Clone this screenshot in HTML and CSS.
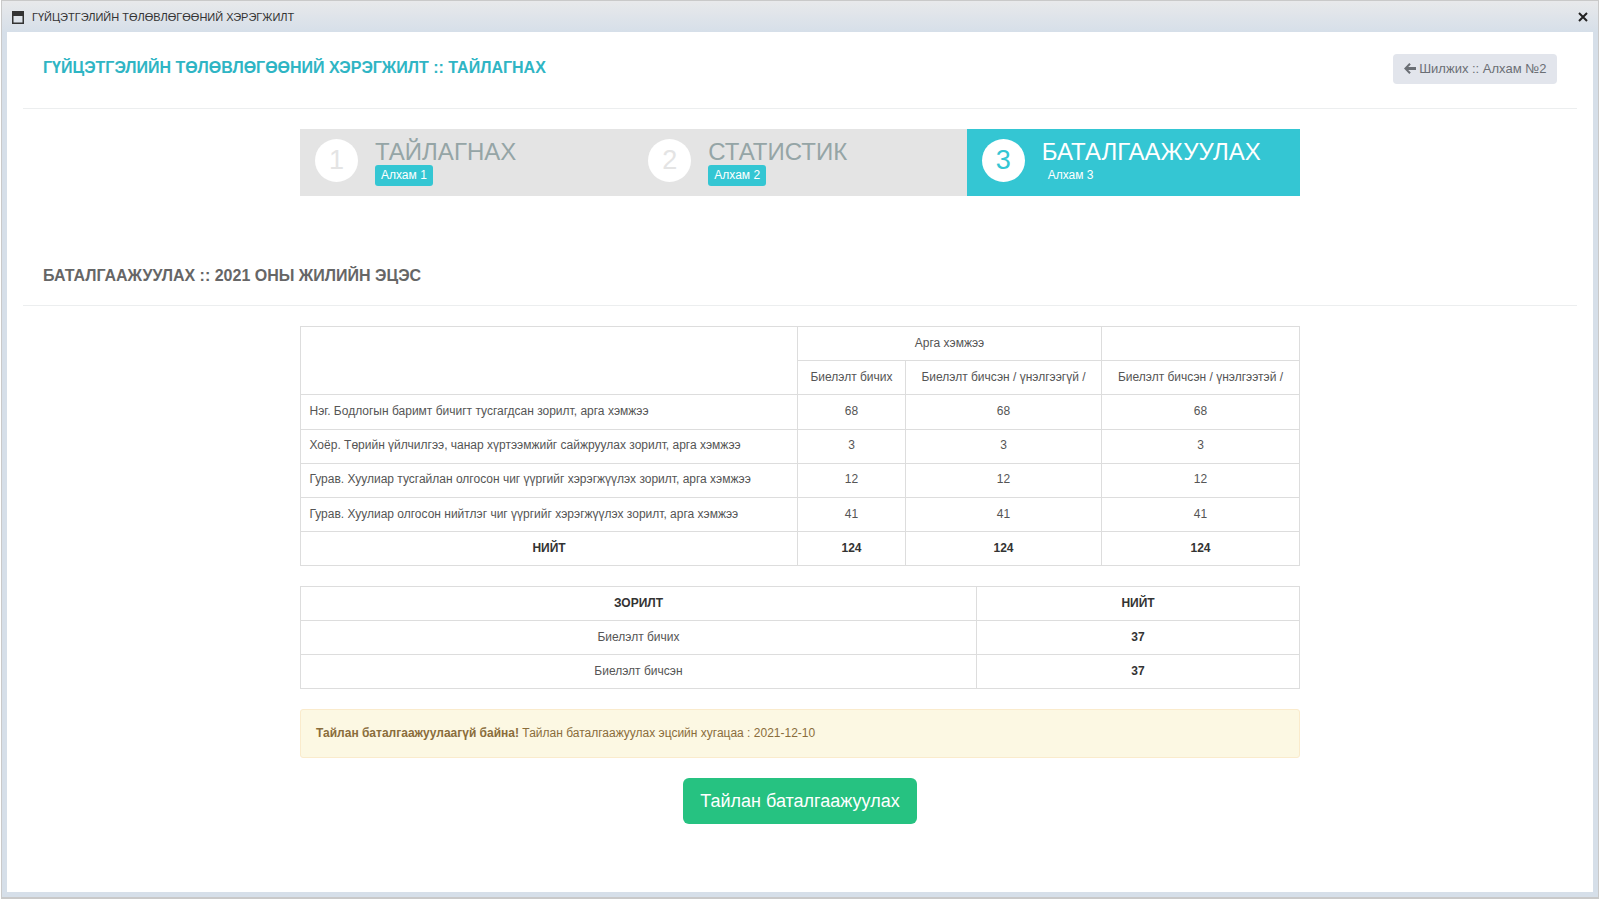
FILE: index.html
```html
<!DOCTYPE html>
<html lang="en">
<head>
  <meta charset="UTF-8"/>
  <title>Гүйцэтгэлийн төлөвлөгөөний хэрэгжилт</title>
  <link rel="stylesheet" href="styles.css">
</head>
<body>
<div class="window">
  <div class="window-bar">
    <svg class="window-icon" width="12" height="13" viewBox="0 0 12 13"><path fill="#333" d="M0 0h12v13H0zM1.500 5v6.500h9V5z"/></svg>
    <span class="window-title">ГҮЙЦЭТГЭЛИЙН ТӨЛӨВЛӨГӨӨНИЙ ХЭРЭГЖИЛТ</span>
    <svg class="window-close" width="10" height="10" viewBox="0 0 10 10"><path stroke="#222" stroke-width="2" d="M1 1l8 8M9 1l-8 8"/></svg>
  </div>

  <div class="window-body">
    <div class="page-head">
      <h1>ГҮЙЦЭТГЭЛИЙН ТӨЛӨВЛӨГӨӨНИЙ ХЭРЭГЖИЛТ :: ТАЙЛАГНАХ</h1>
      <button class="back-btn">
        <svg width="12" height="11" viewBox="0 0 12 11"><path fill="#6b6f75" d="M5.300 0l1.500 1.500-2.600 2.500H12v3H4.200l2.600 2.500L5.300 11 0 5.500z"/></svg>
        Шилжих :: Алхам №2
      </button>
    </div>

    <div class="steps">
      <div class="step">
        <div class="step-num">1</div>
        <div class="step-text">
          <div class="step-name">ТАЙЛАГНАХ</div>
          <span class="step-label">Алхам 1</span>
        </div>
      </div>
      <div class="step">
        <div class="step-num">2</div>
        <div class="step-text">
          <div class="step-name">СТАТИСТИК</div>
          <span class="step-label">Алхам 2</span>
        </div>
      </div>
      <div class="step active">
        <div class="step-num">3</div>
        <div class="step-text">
          <div class="step-name">БАТАЛГААЖУУЛАХ</div>
          <span class="step-label">Алхам 3</span>
        </div>
      </div>
    </div>

    <h2>БАТАЛГААЖУУЛАХ :: 2021 ОНЫ ЖИЛИЙН ЭЦЭС</h2>

    <div class="report">
      <table class="table-main">
        <colgroup>
          <col class="col-name"><col class="col-a"><col class="col-b"><col class="col-c">
        </colgroup>
        <tr>
          <td rowspan="2"></td>
          <td colspan="2" class="center">Арга хэмжээ</td>
          <td></td>
        </tr>
        <tr>
          <td class="center">Биелэлт бичих</td>
          <td class="center">Биелэлт бичсэн / үнэлгээгүй /</td>
          <td class="center">Биелэлт бичсэн / үнэлгээтэй /</td>
        </tr>
        <tr>
          <td>Нэг. Бодлогын баримт бичигт тусгагдсан зорилт, арга хэмжээ</td>
          <td class="center">68</td><td class="center">68</td><td class="center">68</td>
        </tr>
        <tr>
          <td>Хоёр. Төрийн үйлчилгээ, чанар хүртээмжийг сайжруулах зорилт, арга хэмжээ</td>
          <td class="center">3</td><td class="center">3</td><td class="center">3</td>
        </tr>
        <tr>
          <td>Гурав. Хуулиар тусгайлан олгосон чиг үүргийг хэрэгжүүлэх зорилт, арга хэмжээ</td>
          <td class="center">12</td><td class="center">12</td><td class="center">12</td>
        </tr>
        <tr>
          <td>Гурав. Хуулиар олгосон нийтлэг чиг үүргийг хэрэгжүүлэх зорилт, арга хэмжээ</td>
          <td class="center">41</td><td class="center">41</td><td class="center">41</td>
        </tr>
        <tr class="total">
          <td class="center">НИЙТ</td>
          <td class="center">124</td><td class="center">124</td><td class="center">124</td>
        </tr>
      </table>

      <table class="table-goals">
        <colgroup>
          <col class="col-goal"><col>
        </colgroup>
        <tr class="total">
          <td class="center">ЗОРИЛТ</td>
          <td class="center">НИЙТ</td>
        </tr>
        <tr>
          <td class="center">Биелэлт бичих</td>
          <td class="center strong">37</td>
        </tr>
        <tr>
          <td class="center">Биелэлт бичсэн</td>
          <td class="center strong">37</td>
        </tr>
      </table>

      <div class="alert"><strong>Тайлан баталгаажуулаагүй байна!</strong> Тайлан баталгаажуулах эцсийн хугацаа : 2021-12-10</div>

      <div class="actions">
        <button class="confirm-btn">Тайлан баталгаажуулах</button>
      </div>
    </div>
  </div>
</div>
</body>
</html>
```

FILE: styles.css
```css
* {
  box-sizing: border-box;
}

html, body {
  height: 100%;
}

body {
  margin: 0;
  background: #fff;
  font-family: "Liberation Sans", Arial, sans-serif;
  font-size: 12px;
  color: #555;
}

button {
  font-family: inherit;
  cursor: pointer;
}

.window {
  display: flex;
  flex-direction: column;
  height: 899px;
  padding: 0 5px 5px 5px;
  margin: 0 1px;
  background: #d6dfe9;
  border: 1px solid #c9c9c9;
  border-bottom: 2px solid #c9c9c9;
}

.window-bar {
  display: flex;
  align-items: center;
  flex: none;
  height: 31px;
  margin: 0 -5px;
  padding: 0 10px 0 10px;
  background: linear-gradient(#e8e9eb, #d6dfe9);
}

.window-icon {
  margin: 2px 8px 0 0;
}

.window-title {
  flex: 1;
  font-size: 11px;
  color: #333;
}

.window-body {
  flex: 1;
  background: #fff;
  padding: 0 16px;
}

.page-head {
  display: flex;
  justify-content: space-between;
  align-items: flex-start;
  height: 77px;
  padding: 22px 20px 0 20px;
  border-bottom: 1px solid #eceeef;
}

h1 {
  margin: 5px 0 0;
  font-size: 16px;
  font-weight: 700;
  color: #2fb5c4;
}

.back-btn {
  width: 164px;
  height: 30px;
  padding: 0 0 2px;
  border: none;
  border-radius: 4px;
  background: #e2e5ec;
  color: #6b6f75;
  font-size: 13px;
}

.back-btn svg {
  vertical-align: -1px;
}

.steps {
  display: flex;
  width: 1000px;
  height: 67px;
  margin: 20px auto 0;
  background: #e4e4e4;
}

.step {
  display: flex;
  flex: 1;
  align-items: flex-start;
  padding: 8px 0 0 15px;
}

.step-num {
  flex: none;
  width: 43px;
  height: 43px;
  margin: 2px 17px 0 0;
  border-radius: 50%;
  background: #fff;
  color: #e4e4e4;
  font-size: 27px;
  line-height: 43px;
  text-align: center;
}

.step-name {
  height: 28px;
  font-size: 24px;
  line-height: 30px;
  color: #95a5a6;
}

.step-label {
  display: block;
  width: fit-content;
  height: 21px;
  padding: 0 6px;
  border-radius: 3px;
  background: #34c6d3;
  color: #fff;
  font-size: 12px;
  line-height: 20px;
}

.step.active {
  background: #34c6d3;
}

.step.active .step-num {
  color: #34c6d3;
}

.step.active .step-name {
  color: #fff;
}

h2 {
  height: 40px;
  margin: 70px 0 0;
  padding: 0 20px;
  border-bottom: 1px solid #eceeef;
  font-size: 16px;
  line-height: 19px;
  font-weight: 700;
  color: #666;
}

.report {
  width: 1000px;
  margin: 20px auto 0;
}

table {
  width: 100%;
  border-collapse: collapse;
  table-layout: fixed;
  margin-bottom: 20px;
}

td {
  height: 34.200px;
  padding: 0 8.500px 2px;
  border: 1px solid #ddd;
  font-size: 12px;
  color: #555;
}

.table-goals td {
  height: 34px;
}

.center {
  text-align: center;
}

.total td, .strong {
  font-weight: 700;
  color: #333;
}

.col-name { width: 497px; }
.col-a { width: 108px; }
.col-b { width: 196px; }
.col-goal { width: 676px; }

.alert {
  height: 49px;
  padding: 0 15px;
  border: 1px solid #faebcc;
  border-radius: 3px;
  background: #fcf8e3;
  color: #8a6d3b;
  font-size: 12px;
  line-height: 47px;
}

.actions {
  margin-top: 20px;
  text-align: center;
}

.confirm-btn {
  width: 234px;
  height: 46px;
  border: none;
  border-radius: 6px;
  background: #26c281;
  color: #fff;
  font-size: 18px;
}
```
